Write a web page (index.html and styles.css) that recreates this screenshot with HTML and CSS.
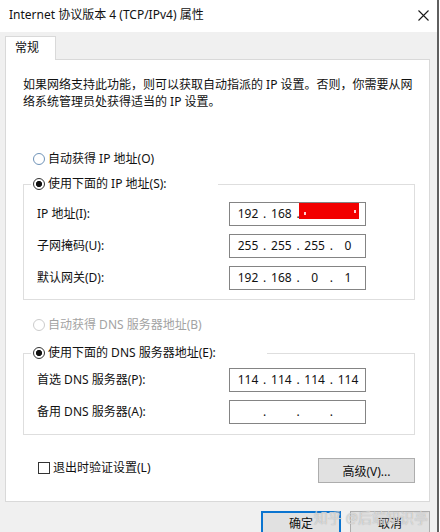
FILE: index.html
```html
<!DOCTYPE html>
<html lang="zh-CN">
<head>
<meta charset="utf-8">
<title>Internet 协议版本 4 (TCP/IPv4) 属性</title>
<link rel="stylesheet" href="styles.css">
</head>
<body>
<div class="window">
  <div class="titlebar">
    <span class="title">Internet 协议版本 4 (TCP/IPv4) 属性</span>
    <svg class="close" width="11" height="11" viewBox="0 0 11 11"><path d="M0.5 0.5L10.5 10.5M10.5 0.5L0.5 10.5" stroke="#1a1a1a" stroke-width="1.1" fill="none"/></svg>
  </div>
  <div class="body">
    <div class="tabs"><div class="tab">常规</div></div>
    <div class="panel">
      <p class="desc">如果网络支持此功能，则可以获取自动指派的 IP 设置。否则，你需要从网<br>络系统管理员处获得适当的 IP 设置。</p>

      <div class="radio-row auto-ip"><span class="radio hover"></span><span>自动获得 IP 地址(O)</span></div>

      <fieldset class="group ip-group">
        <legend class="legend legend-ip"><span class="radio checked"></span><span>使用下面的 IP 地址(S):</span></legend>
        <div class="row">
          <span class="label">IP 地址(I):</span>
          <div class="ipbox">
            <span class="oct">192</span><span class="dot">.</span><span class="oct">168</span><span class="dot">.</span><span class="oct"></span><span class="dot">.</span><span class="oct"></span>
            <span class="redact"><i class="mark m1"></i><i class="mark m2"></i></span>
          </div>
        </div>
        <div class="row">
          <span class="label">子网掩码(U):</span>
          <div class="ipbox">
            <span class="oct">255</span><span class="dot">.</span><span class="oct">255</span><span class="dot">.</span><span class="oct">255</span><span class="dot">.</span><span class="oct">0</span>
          </div>
        </div>
        <div class="row">
          <span class="label">默认网关(D):</span>
          <div class="ipbox">
            <span class="oct">192</span><span class="dot">.</span><span class="oct">168</span><span class="dot">.</span><span class="oct">0</span><span class="dot">.</span><span class="oct">1</span>
          </div>
        </div>
      </fieldset>

      <div class="radio-row auto-dns disabled"><span class="radio"></span><span>自动获得 DNS 服务器地址(B)</span></div>

      <fieldset class="group dns-group">
        <legend class="legend legend-dns"><span class="radio checked"></span><span>使用下面的 DNS 服务器地址(E):</span></legend>
        <div class="row">
          <span class="label">首选 DNS 服务器(P):</span>
          <div class="ipbox">
            <span class="oct">114</span><span class="dot">.</span><span class="oct">114</span><span class="dot">.</span><span class="oct">114</span><span class="dot">.</span><span class="oct">114</span>
          </div>
        </div>
        <div class="row">
          <span class="label">备用 DNS 服务器(A):</span>
          <div class="ipbox">
            <span class="oct"></span><span class="dot">.</span><span class="oct"></span><span class="dot">.</span><span class="oct"></span><span class="dot">.</span><span class="oct"></span>
          </div>
        </div>
      </fieldset>

      <div class="options">
        <div class="check-row"><span class="checkbox"></span><span>退出时验证设置(L)</span></div>
        <button class="btn adv">高级(V)...</button>
      </div>
    </div>
    <div class="buttons">
      <button class="btn primary">确定</button>
      <button class="btn">取消</button>
    </div>
  </div>
  <div class="watermark">知乎 @后端知识亭</div>
</div>
</body>
</html>
```

FILE: styles.css
```css
html, body {
  margin: 0;
  padding: 0;
  background: #ffffff;
  overflow: hidden;
}

body {
  font-family: "Noto Sans", "Noto Sans CJK SC", sans-serif;
  font-size: 12px;
  line-height: 18px;
  color: #111;
}

.window {
  width: 437px;
  height: 532px;
  border-right: 2px solid #5f5f5f;
  background: #f0f0f0;
  overflow: hidden;
  position: relative;
}

.titlebar {
  height: 32px;
  background: #ffffff;
  display: flex;
  align-items: center;
  justify-content: space-between;
  padding: 0 8px 2px 9px;
  box-sizing: border-box;
}

.title {
  font-size: 12px;
  color: #111;
}

.close {
  display: block;
}

.body {
  padding: 4px 7px 0 5px;
}

.tabs {
  display: flex;
}

.tab {
  width: 51px;
  height: 24px;
  box-sizing: border-box;
  border: 1px solid #d9d9d9;
  border-bottom: none;
  background: #ffffff;
  padding-left: 9px;
  line-height: 22px;
  position: relative;
  margin-bottom: -1px;
}

.panel {
  height: 443px;
  box-sizing: border-box;
  background: #ffffff;
  border: 1px solid #d9d9d9;
  padding: 16px 14px 0 17px;
}

.desc {
  margin: 0;
  line-height: 17px;
}

.radio-row {
  display: flex;
  align-items: center;
  gap: 3px;
  height: 18px;
  margin-left: 10px;
}

.auto-ip {
  margin-top: 40px;
}

.auto-dns {
  margin-top: 16px;
}

.disabled {
  color: #a3a3a3;
}

.radio {
  width: 12px;
  height: 12px;
  box-sizing: border-box;
  border: 1px solid #333;
  border-radius: 50%;
  background: #fff;
  flex: none;
}

.radio.hover {
  border-color: #6f93b8;
}

.disabled .radio {
  border-color: #cccccc;
}

.radio.checked {
  background: radial-gradient(circle, #111 0 2.8px, #fff 3.3px);
}

.group {
  margin: 0;
  min-width: 0;
  border: 1px solid #dedede;
}

.ip-group {
  margin-top: 7px;
  padding: 9px 0 9px 13px;
}

.dns-group {
  margin-top: 10px;
  padding: 6px 0 10px 13px;
}

.legend {
  display: flex;
  align-items: center;
  gap: 3px;
  height: 18px;
  padding: 0 0 0 2px;
  margin-left: -6px;
  background: #fff;
  box-sizing: border-box;
}

.legend-ip {
  width: 187px;
}

.legend-dns {
  width: 236px;
}

.row {
  display: flex;
  align-items: center;
  height: 24px;
}

.row + .row {
  margin-top: 8px;
}

.label {
  width: 192px;
  flex: none;
}

.ipbox {
  width: 137px;
  height: 24px;
  box-sizing: border-box;
  border: 1px solid #848484;
  background: #fff;
  display: flex;
  align-items: center;
  padding-left: 5px;
  position: relative;
  font-size: 12px;
}

.oct {
  width: 26px;
  text-align: center;
  flex: none;
}

.dot {
  width: 7.33px;
  text-align: center;
  flex: none;
}

.redact {
  position: absolute;
  left: 69px;
  top: 0;
  width: 60px;
  height: 16px;
  background: #f20000;
}

.mark {
  position: absolute;
  width: 2px;
  height: 3px;
  background: #ffd0d0;
}

.m1 {
  left: 5px;
  top: 9px;
}

.m2 {
  right: 3px;
  top: 7px;
}

.options {
  display: flex;
  justify-content: space-between;
  align-items: center;
  margin-top: 23px;
  height: 25px;
  padding-left: 15px;
}

.check-row {
  display: flex;
  align-items: center;
  gap: 3px;
  margin-bottom: 5px;
}

.checkbox {
  width: 12px;
  height: 12px;
  box-sizing: border-box;
  border: 1px solid #333;
  background: #fff;
}

.btn {
  font-family: inherit;
  font-size: 12px;
  color: #111;
  background: #e1e1e1;
  border: 1px solid #adadad;
  padding: 0;
  margin: 0;
  box-sizing: border-box;
}

.adv {
  width: 97px;
  height: 25px;
}

.buttons {
  display: flex;
  justify-content: flex-end;
  gap: 9px;
  margin-top: 9px;
}

.buttons .btn {
  width: 80px;
  height: 24px;
}

.btn.primary {
  border: 2px solid #0a74d0;
}

.watermark {
  position: absolute;
  right: 9px;
  top: 508px;
  font-size: 14px;
  line-height: 20px;
  color: rgba(255, 255, 255, 0.55);
  text-shadow: 0 0 1px #9a9a9a;
  letter-spacing: 0;
}
```
